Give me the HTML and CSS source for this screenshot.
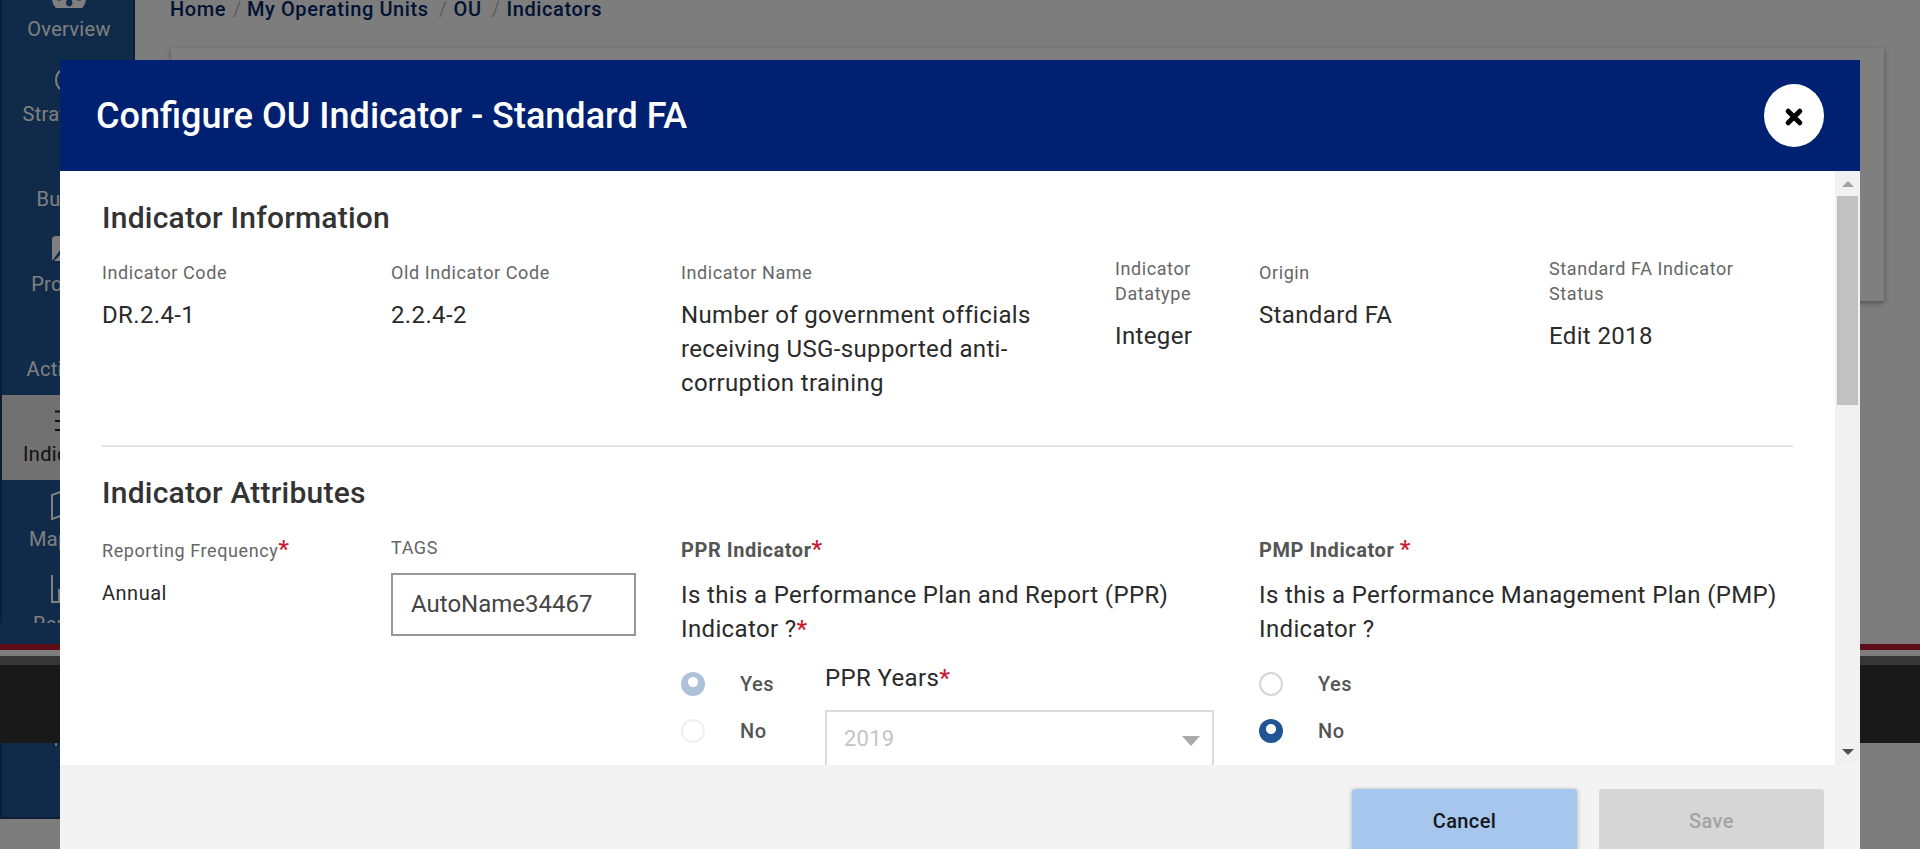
FILE: index.html
```html
<!DOCTYPE html>
<html lang="en">
<head>
<meta charset="utf-8">
<title>Configure OU Indicator</title>
<link rel="stylesheet" href="styles.css">
</head>
<body>
<div class="app">
  <nav class="sidebar">
    <a class="nav-item"><svg class="nav-icon" viewBox="0 0 34 30"><path fill="currentColor" fill-rule="evenodd" d="M17 1a16.500 16.500 0 0 1 14 26c-.5.8-1 1-2 1H5c-1 0-1.500-.2-2-1A16.500 16.500 0 0 1 17 1zM14.500 21.500a3.200 3.200 0 1 0 5.500 0L18 9h-2zM5 16.500h4v4H5zM25 16.500h4v4h-4z"/></svg><span>Overview</span></a>
    <a class="nav-item"><svg class="nav-icon" viewBox="0 0 34 30"><circle cx="16" cy="15" r="12" fill="none" stroke="currentColor" stroke-width="2"/></svg><span>Strategies</span></a>
    <a class="nav-item"><svg class="nav-icon" viewBox="0 0 34 30"></svg><span>Budget</span></a>
    <a class="nav-item"><svg class="nav-icon" viewBox="0 0 34 30"><path fill="currentColor" d="M0 25V5q0-4 4-4h26q4 0 4 4v6L23 9 11 19 8 15 1 25zM2 26l7-7 3 3 11-10 11 4v7q0 3-4 3z"/></svg><span>Projects</span></a>
    <a class="nav-item"><svg class="nav-icon" viewBox="0 0 34 30"></svg><span>Activities</span></a>
    <a class="nav-item active"><svg class="nav-icon" viewBox="0 0 34 30"><path fill="none" stroke="currentColor" stroke-width="2.200" d="M3 6.500h5M10 6.500h21M3 16h5M10 16h21M3 25h5M10 25h21"/></svg><span>Indicators</span></a>
    <a class="nav-item"><svg class="nav-icon" viewBox="0 0 34 30"><path fill="none" stroke="currentColor" stroke-width="2" d="M0 5 11 1l11 4 11-4v24l-11 4-11-4-11 4zM11 1v24M22 5v24"/></svg><span>Mapping</span></a>
    <a class="nav-item"><svg class="nav-icon" viewBox="0 0 34 30"><path fill="none" stroke="currentColor" stroke-width="2" d="M0 0v27h33M7 27V15h4v12M17 27V8h4v19"/></svg><span>Reports</span></a>
  </nav>
  <div class="content">
    <div class="crumbs"><a>Home</a><i class="first">/</i><a>My Operating Units</a><i>/</i><a>OU</a><i>/</i><a>Indicators</a></div>
    <div class="card"></div>
  </div>
  <footer class="site-footer">
    <div class="f-blue"></div><div class="f-red"></div><div class="f-light"></div><div class="f-gray"></div><div class="f-dark"></div><div class="f-mark"></div>
  </footer>
</div>
<div class="backdrop">
  <section class="modal">
    <header class="modal-head">
      <h1>Configure OU Indicator - Standard FA</h1>
      <button class="close"><svg viewBox="0 0 20 20"><path d="M4.200 4.200l11.600 11.600M15.800 4.200L4.200 15.800" stroke="#000" stroke-width="5" stroke-linecap="round"/></svg></button>
    </header>
    <div class="modal-main">
      <div class="scroll">
        <h2>Indicator Information</h2>
        <div class="info">
          <div><p class="label one">Indicator Code</p><p class="value">DR.2.4-1</p></div>
          <div><p class="label one">Old Indicator Code</p><p class="value">2.2.4-2</p></div>
          <div><p class="label one">Indicator Name</p><p class="value">Number of government officials<br>receiving USG-supported anti-<br>corruption training</p></div>
          <div><p class="label">Indicator<br>Datatype</p><p class="value">Integer</p></div>
          <div><p class="label one">Origin</p><p class="value">Standard FA</p></div>
          <div><p class="label">Standard FA Indicator<br>Status</p><p class="value">Edit 2018</p></div>
        </div>
        <h2 class="second">Indicator Attributes</h2>
        <div class="attrs">
          <div><p class="label freq">Reporting Frequency<b class="req">*</b></p><p class="annual">Annual</p></div>
          <div><p class="label tags">TAGS</p><div class="tag-input">AutoName34467</div></div>
          <div>
            <p class="strong">PPR Indicator<b class="req">*</b></p>
            <p class="value">Is this a Performance Plan and Report (PPR)<br>Indicator ?<b class="req">*</b></p>
            <div class="choice">
              <div class="radios"><label class="off"><span class="radio on"></span>Yes</label><label class="off"><span class="radio"></span>No</label></div>
              <div class="years"><p class="value years-label">PPR Years<b class="req">*</b></p><div class="select"><span>2019</span><span class="caret"></span></div></div>
            </div>
          </div>
          <div>
            <p class="strong">PMP Indicator <b class="req">*</b></p>
            <p class="value">Is this a Performance Management Plan (PMP)<br>Indicator ?</p>
            <div class="choice"><div class="radios"><label><span class="radio"></span>Yes</label><label><span class="radio on"></span>No</label></div></div>
          </div>
        </div>
      </div>
      <div class="bar"><span class="up"></span><span class="thumb"></span><span class="down"></span></div>
    </div>
    <footer class="modal-foot"><button class="btn cancel">Cancel</button><button class="btn save">Save</button></footer>
  </section>
</div>
</body>
</html>
```
FILE: styles.css
```css
* { box-sizing: border-box; }
html { height: 849px; overflow: hidden; }
body { margin: 0; height: 849px; overflow: hidden; font-family: Roboto, "Liberation Sans", sans-serif; background: #fafafa; }
h1, h2, p { margin: 0; font-weight: 400; }
.app { position: relative; display: flex; height: 849px; overflow: hidden; }
.sidebar { flex: none; width: 135px; height: 849px; margin-top: -30px; border: 2px solid #163c6c; border-top: 0; background: #205493; color: #fff; }
.nav-item { display: flex; flex-direction: column; align-items: center; height: 85px; padding: 10px 0 0 3px; font-size: 20px; line-height: 24px; letter-spacing: .3px; }
.nav-icon { width: 34px; height: 30px; margin-bottom: 7px; overflow: visible; }
.nav-item.active { background: #e3e3e3; color: #222; }
.content { flex: 1; padding: 0 36px; }
.crumbs { display: flex; height: 45px; margin-left: -1px; font-size: 20px; font-weight: 500; line-height: 18px; letter-spacing: .6px; color: #002668; }
.crumbs i { font-style: normal; font-weight: 400; color: #bbb; margin: 0 6px 0 10px; }
.crumbs .first { margin: 0 5px 0 7px; }
.card { height: 253px; margin-top: 3px; background: #fff; box-shadow: 0 2px 5px rgba(0,0,0,.35); }
.site-footer { position: absolute; left: 0; right: 0; top: 623px; }
.f-blue { width: 60px; height: 21px; background: #205493; }
.f-red { height: 6px; background: #bb1a2e; }
.f-light { height: 6px; background: #fdfdfd; }
.f-gray { height: 9px; background: #6c6c6c; }
.f-dark { height: 78px; background: #323232; }
.f-mark { width: 2px; height: 3px; margin-left: 55px; background: #ddd; }
.backdrop { position: absolute; inset: 0; overflow: hidden; padding: 60px 60px 0; background: rgba(0,0,0,.5); }
.modal { display: flex; flex-direction: column; height: 820px; background: #fff; }
.modal-head { display: flex; justify-content: space-between; align-items: flex-start; height: 111px; padding: 24px 36px; background: #002071; color: #fff; }
h1 { font-size: 36px; font-weight: 500; line-height: 64px; white-space: nowrap; }
.close { width: 60px; height: 63px; padding: 3px 0 0; border: 0; border-radius: 50%; background: #fff; display: grid; place-items: center; }
.close svg { width: 20px; height: 20px; }
.modal-main { display: flex; height: 594px; overflow: hidden; }
.scroll { flex: 1; height: 594px; padding: 27px 42px 0; overflow: hidden; color: #2a2a2a; }
h2 { font-size: 30px; font-weight: 500; line-height: 40px; letter-spacing: .22px; color: #333; }
.info { display: grid; grid-template-columns: 289px 290px 434px 144px 290px 1fr; height: 205px; padding-top: 18px; margin-bottom: 2px; }
.label { font-size: 18px; line-height: 25px; letter-spacing: .59px; color: #666; margin-bottom: 13px; white-space: nowrap; }
.one { padding-top: 4px; }
.value { font-size: 24px; line-height: 34px; letter-spacing: .36px; white-space: nowrap; }
.second { border-top: 2px solid #e2e2e2; padding-top: 26px; height: 69px; }
.attrs { display: grid; grid-template-columns: 289px 290px 578px 1fr; padding-top: 22px; }
.req { color: #cb1b34; font-weight: 500; font-size: 24px; letter-spacing: 0; line-height: 1; }
.freq { padding-top: 1px; height: 28px; margin-bottom: 15px; }
.annual { font-size: 20px; line-height: 28px; letter-spacing: .5px; }
.tags { margin: -1px 0 13px; }
.tag-input { width: 245px; height: 63px; border: 2px solid #979797; padding: 0 18px; font-size: 24px; line-height: 59px; color: #444; }
.strong { height: 28px; font-size: 20px; font-weight: 700; line-height: 28px; letter-spacing: .55px; color: #555; margin-bottom: 14px; }
.choice { display: flex; }
.radios { width: 144px; padding-top: 14px; }
.radios label { display: flex; align-items: center; gap: 35px; height: 47px; font-size: 20px; font-weight: 500; letter-spacing: .5px; color: #555; }
.radio { width: 24px; height: 24px; border: 2px solid #d6d6d6; border-radius: 50%; }
.radio.on { border: 0; background: radial-gradient(circle at 12px 10px, #fff 0 4.500px, #205493 5.500px); }
.off .radio { opacity: .36; }
.years { width: 389px; }
.years-label { padding-top: 15px; height: 64px; }
.select { display: flex; justify-content: space-between; align-items: center; height: 60px; padding: 0 12px 4px 17px; border: 2px solid #dadada; font-size: 22px; letter-spacing: .2px; color: #c4c4c4; }
.caret { border: 9px solid transparent; border-top: 10px solid #aaa; border-bottom: 0; margin-top: 5px; }
.bar { width: 25px; display: flex; flex-direction: column; align-items: center; background: #f1f1f1; }
.up { margin: 10px 0 9px; border: 6px solid transparent; border-bottom-color: #a3a3a3; border-top: 0; }
.thumb { width: 21px; height: 209px; background: #c1c1c1; }
.down { margin-top: auto; margin-bottom: 10px; border: 6px solid transparent; border-top-color: #505050; border-bottom: 0; }
.modal-foot { flex: 1; display: flex; justify-content: flex-end; align-items: flex-start; gap: 22px; padding: 24px 36px 0; background: #f3f3f3; }
.btn { width: 225px; height: 64px; border: 0; border-radius: 3px; font: 500 20px Roboto, sans-serif; letter-spacing: .4px; }
.cancel { background: #a6c6ed; color: #15171b; box-shadow: 0 1px 5px rgba(0,0,0,.3); }
.save { background: #d6d6d6; color: #a3a3a3; }
```
